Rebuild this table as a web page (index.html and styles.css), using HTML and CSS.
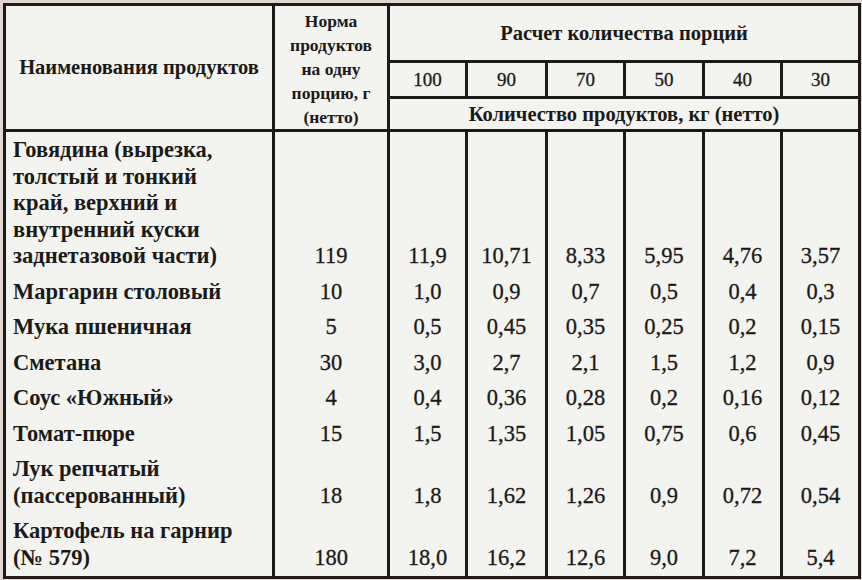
FILE: index.html
```html
<!DOCTYPE html>
<html lang="ru">
<head>
<meta charset="utf-8">
<title>Расчет количества порций</title>
<link rel="stylesheet" href="styles.css">
</head>
<body>
<table class="recipe">
  <colgroup>
    <col class="c-name">
    <col class="c-norm">
    <col class="c-num">
    <col class="c-num c-wide">
    <col class="c-num">
    <col class="c-num c-mid">
    <col class="c-num">
    <col class="c-num">
  </colgroup>
  <thead>
    <tr class="h1">
      <th rowspan="3" class="name-h">Наименования продуктов</th>
      <th rowspan="3" class="norm-h">Норма<br>продуктов<br>на одну<br>порцию, г<br>(нетто)</th>
      <th colspan="6" class="calc-h">Расчет количества порций</th>
    </tr>
    <tr class="h2">
      <th class="num-h">100</th>
      <th class="num-h">90</th>
      <th class="num-h">70</th>
      <th class="num-h">50</th>
      <th class="num-h">40</th>
      <th class="num-h">30</th>
    </tr>
    <tr class="h3">
      <th colspan="6" class="qty-h">Количество продуктов, кг (нетто)</th>
    </tr>
  </thead>
  <tbody>
    <tr class="first">
      <td class="name">Говядина (вырезка,<br>толстый и тонкий<br>край, верхний и<br>внутренний куски<br>заднетазовой части)</td>
      <td class="num">119</td><td class="num">11,9</td><td class="num">10,71</td><td class="num">8,33</td><td class="num">5,95</td><td class="num">4,76</td><td class="num">3,57</td>
    </tr>
    <tr>
      <td class="name">Маргарин столовый</td>
      <td class="num">10</td><td class="num">1,0</td><td class="num">0,9</td><td class="num">0,7</td><td class="num">0,5</td><td class="num">0,4</td><td class="num">0,3</td>
    </tr>
    <tr>
      <td class="name">Мука пшеничная</td>
      <td class="num">5</td><td class="num">0,5</td><td class="num">0,45</td><td class="num">0,35</td><td class="num">0,25</td><td class="num">0,2</td><td class="num">0,15</td>
    </tr>
    <tr>
      <td class="name">Сметана</td>
      <td class="num">30</td><td class="num">3,0</td><td class="num">2,7</td><td class="num">2,1</td><td class="num">1,5</td><td class="num">1,2</td><td class="num">0,9</td>
    </tr>
    <tr>
      <td class="name">Соус «Южный»</td>
      <td class="num">4</td><td class="num">0,4</td><td class="num">0,36</td><td class="num">0,28</td><td class="num">0,2</td><td class="num">0,16</td><td class="num">0,12</td>
    </tr>
    <tr>
      <td class="name">Томат-пюре</td>
      <td class="num">15</td><td class="num">1,5</td><td class="num">1,35</td><td class="num">1,05</td><td class="num">0,75</td><td class="num">0,6</td><td class="num">0,45</td>
    </tr>
    <tr>
      <td class="name">Лук репчатый<br>(пассерованный)</td>
      <td class="num">18</td><td class="num">1,8</td><td class="num">1,62</td><td class="num">1,26</td><td class="num">0,9</td><td class="num">0,72</td><td class="num">0,54</td>
    </tr>
    <tr class="last">
      <td class="name">Картофель на гарнир<br>(№ 579)</td>
      <td class="num">180</td><td class="num">18,0</td><td class="num">16,2</td><td class="num">12,6</td><td class="num">9,0</td><td class="num">7,2</td><td class="num">5,4</td>
    </tr>
  </tbody>
</table>
</body>
</html>
```

FILE: styles.css
```css
html {
  background: #e2d6d0;
}

body {
  margin: 0;
  padding: 3px 2px 0 3px;
  font-family: "Liberation Serif", "Times New Roman", serif;
  color: #1b1a18;
}

.recipe {
  width: 857px;
  table-layout: fixed;
  border-collapse: collapse;
  border: 3px solid #231c17;
  background: #f3f3ef;
}

.c-name { width: 269px; }
.c-norm { width: 115px; }
.c-num { width: 78px; }
.c-wide { width: 80px; }
.c-mid { width: 79px; }

th, td {
  border-left: 3px solid #1c1a18;
  border-right: 3px solid #1c1a18;
  padding: 0;
}

thead th {
  font-weight: 700;
  font-size: 20.5px;
  border-bottom: 3px solid #1c1a18;
  text-align: center;
  vertical-align: middle;
  white-space: nowrap;
}

.h1 { height: 57px; }
.h2 { height: 36px; }
.h3 { height: 33px; }

.name-h {
  font-size: 20.5px;
}

.norm-h {
  font-size: 17.5px;
  line-height: 24px;
  padding-top: 2px;
}

.num-h {
  font-weight: 400;
  font-size: 19px;
  -webkit-text-stroke: 0.3px #1b1a18;
}

.qty-h {
  font-size: 20.5px;
}

tbody td {
  font-size: 22.5px;
  line-height: 26.5px;
  padding-top: 4px;
  padding-bottom: 5px;
  border-top: 0;
  border-bottom: 0;
}

tbody tr.first td { padding-top: 5px; }
tbody tr.last td { padding-bottom: 5px; }

.name {
  font-weight: 700;
  text-align: left;
  padding-left: 7px;
  vertical-align: top;
  white-space: nowrap;
}

.num {
  text-align: center;
  vertical-align: bottom;
  -webkit-text-stroke: 0.3px #1b1a18;
}
```
